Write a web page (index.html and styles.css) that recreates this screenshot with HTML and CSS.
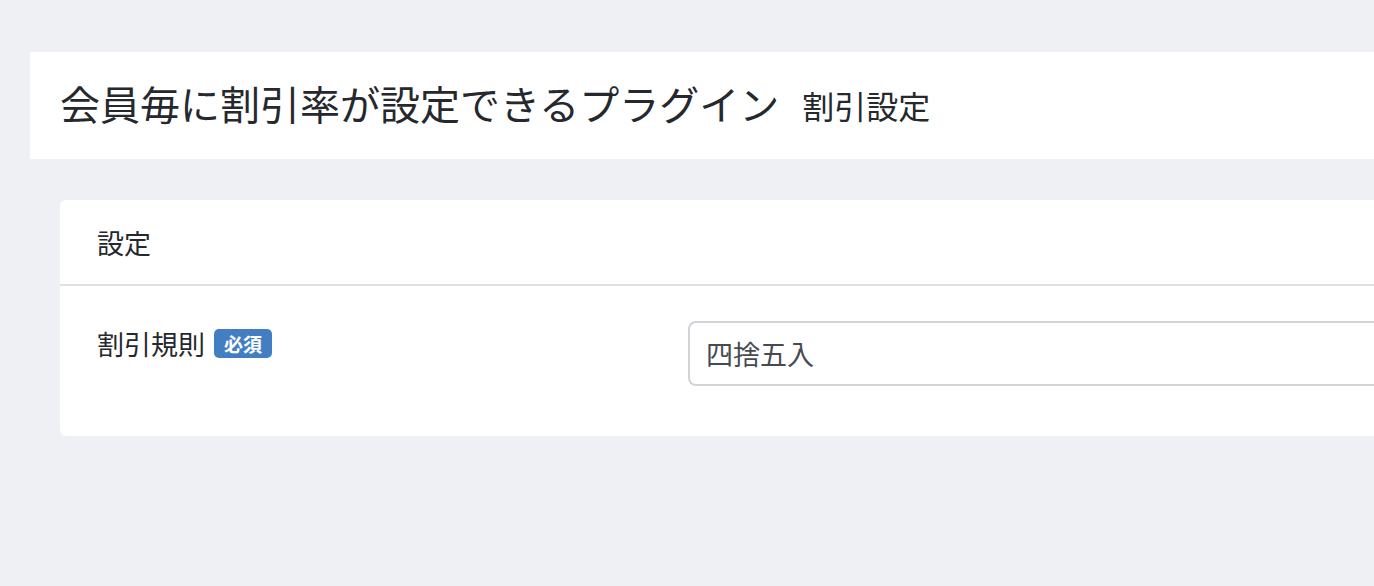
FILE: index.html
```html
<!DOCTYPE html>
<html lang="ja">
<head>
<meta charset="utf-8">
<title>割引設定</title>
<link rel="stylesheet" href="styles.css">
</head>
<body>
<div class="page">
  <header class="page-header">
    <h1 class="title">会員毎に割引率が設定できるプラグイン</h1>
    <span class="subtitle">割引設定</span>
  </header>
  <section class="card">
    <div class="card-header">設定</div>
    <div class="card-body">
      <div class="form-row">
        <div class="label">割引規則<span class="badge">必須</span></div>
        <div class="field"><div class="input">四捨五入</div></div>
      </div>
    </div>
  </section>
</div>
</body>
</html>
```
FILE: styles.css
```css
html, body {
  margin: 0;
  padding: 0;
  background: #eef0f4;
  overflow: hidden;
}
body {
  font-family: "Noto Sans CJK JP", "Noto Sans", sans-serif;
  color: #25282c;
  width: 1374px;
  height: 586px;
}
.page {
  padding: 52px 0 0 30px;
}
.page-header {
  background: #fff;
  height: 107px;
  box-sizing: border-box;
  display: flex;
  align-items: center;
  padding: 0 0 6px 30px;
  gap: 23px;
}
.title {
  margin: 0;
  font-size: 40px;
  font-weight: 400;
  line-height: 1;
}
.subtitle {
  font-size: 32px;
  line-height: 1;
  padding-top: 4px;
}
.card {
  margin: 41px 0 0 30px;
  background: #fff;
  border-radius: 6px 0 0 6px;
}
.card-header {
  height: 84px;
  display: flex;
  align-items: center;
  padding-left: 37px;
  font-size: 27px;
  border-bottom: 2px solid #e0e0e2;
}
.card-body {
  padding: 35px 0 50px 37px;
}
.form-row {
  display: grid;
  grid-template-columns: 591px 1fr;
}
.label {
  font-size: 27px;
  line-height: 1;
  display: flex;
  align-items: center;
  gap: 9px;
  padding-top: 8px;
  align-self: start;
}
.badge {
  background: #437ec2;
  color: #fff;
  font-weight: 700;
  font-size: 19px;
  border-radius: 5px;
  width: 58px;
  height: 29px;
  display: flex;
  align-items: center;
  justify-content: center;
}
.input {
  height: 61px;
  border: 2px solid #d0d4d9;
  border-right: none;
  border-radius: 8px 0 0 8px;
  display: flex;
  align-items: center;
  padding-left: 16px;
  font-size: 27px;
  color: #464b52;
}
```
